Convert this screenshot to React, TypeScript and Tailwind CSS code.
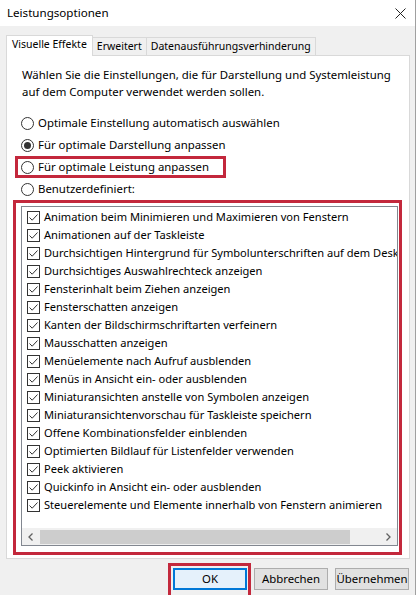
const items = [
  "Animation beim Minimieren und Maximieren von Fenstern",
  "Animationen auf der Taskleiste",
  "Durchsichtigen Hintergrund für Symbolunterschriften auf dem Desktop",
  "Durchsichtiges Auswahlrechteck anzeigen",
  "Fensterinhalt beim Ziehen anzeigen",
  "Fensterschatten anzeigen",
  "Kanten der Bildschirmschriftarten verfeinern",
  "Mausschatten anzeigen",
  "Menüelemente nach Aufruf ausblenden",
  "Menüs in Ansicht ein- oder ausblenden",
  "Miniaturansichten anstelle von Symbolen anzeigen",
  "Miniaturansichtenvorschau für Taskleiste speichern",
  "Offene Kombinationsfelder einblenden",
  "Optimierten Bildlauf für Listenfelder verwenden",
  "Peek aktivieren",
  "Quickinfo in Ansicht ein- oder ausblenden",
  "Steuerelemente und Elemente innerhalb von Fenstern animieren",
];

const radios = [
  { label: "Optimale Einstellung automatisch auswählen", checked: false },
  { label: "Für optimale Darstellung anpassen", checked: true },
  { label: "Für optimale Leistung anpassen", checked: false, marked: true },
  { label: "Benutzerdefiniert:", checked: false },
];

function Radio({ checked }: { checked: boolean }) {
  return (
    <span className="w-[13px] h-[13px] rounded-full border border-[#333] bg-white flex items-center justify-center shrink-0">
      {checked && <span className="w-[7px] h-[7px] rounded-full bg-[#333]" />}
    </span>
  );
}

function Check() {
  return (
    <span className="w-[13px] h-[13px] border border-[#333] bg-white shrink-0 flex items-center justify-center">
      <svg width="11" height="11" viewBox="0 0 11 11">
        <path d="M1.5 5.5 L4.2 8.2 L9.5 2.5" fill="none" stroke="#333" strokeWidth="1" />
      </svg>
    </span>
  );
}

function Button({ label, primary }: { label: string; primary?: boolean }) {
  return (
    <button
      className={
        primary
          ? "w-[74px] h-[22px] bg-[#e5f1fb] border-2 border-[#0078d7] text-[11.4px] text-black"
          : "w-[74px] h-[22px] bg-[#e1e1e1] border border-[#adadad] text-[11.4px] text-black"
      }
    >
      {label}
    </button>
  );
}

export default function App() {
  return (
    <div
      className="w-[418px] h-[595px] bg-white flex overflow-hidden text-black text-[11.4px]"
      style={{ fontFamily: '"Noto Sans", "Open Sans", sans-serif' }}
    >
      <div className="w-[416px] h-full bg-[#f0f0f0] border-r border-[#a0a0a0] flex flex-col">
        {/* title bar */}
        <div className="h-[26px] bg-white flex items-center justify-between pl-[7px] pr-[9px] shrink-0">
          <span className="text-[11.6px]">Leistungsoptionen</span>
          <svg width="11" height="11" viewBox="0 0 11 11">
            <path d="M0.5 0.5 L10.5 10.5 M10.5 0.5 L0.5 10.5" stroke="#222" strokeWidth="1" />
          </svg>
        </div>

        <div className="px-[6px] pt-[8px] flex flex-col">
          {/* tabs */}
          <div className="flex items-end h-[21px] whitespace-nowrap text-[10.5px]">
            <div className="h-[21px] px-[5px] bg-white border border-b-0 border-[#d9d9d9] flex items-center relative z-10 -mb-px pb-[3px]">
              Visuelle Effekte
            </div>
            <div className="h-[18px] px-[4px] bg-[#f0f0f0] border border-l-0 border-b-0 border-[#d9d9d9] flex items-center">
              Erweitert
            </div>
            <div className="h-[18px] px-[4px] bg-[#f0f0f0] border border-l-0 border-b-0 border-[#d9d9d9] flex items-center">
              Datenausführungsverhinderung
            </div>
          </div>

          {/* panel */}
          <div className="w-[404px] h-[504px] bg-white border border-[#d9d9d9] pt-[10px] flex flex-col">
            <p className="pl-[15px] leading-[17px] whitespace-nowrap">
              Wählen Sie die Einstellungen, die für Darstellung und Systemleistung
              <br />
              auf dem Computer verwendet werden sollen.
            </p>

            <div className="mt-[12px] pl-[14px] flex flex-col">
              {radios.map((r) => (
                <div key={r.label} className="h-[22px] flex items-center gap-[4px] relative">
                  <Radio checked={r.checked} />
                  <span>{r.label}</span>
                  {r.marked && (
                    <span className="absolute -left-[6px] top-0 w-[211px] h-[22px] border-[3px] border-[#c3283c]" />
                  )}
                </div>
              ))}
            </div>

            {/* list box */}
            <div className="mt-[6px] ml-[14px] w-[377px] h-[340px] relative">
              <div className="w-full h-full border border-[#828790] bg-white flex flex-col overflow-hidden">
                <div className="flex-1 pt-[1px] pl-[5px] overflow-hidden text-[11.1px]">
                  {items.map((t) => (
                    <div key={t} className="h-[18px] flex items-center gap-[4px] whitespace-nowrap">
                      <Check />
                      <span>{t}</span>
                    </div>
                  ))}
                </div>
                {/* horizontal scrollbar */}
                <div className="h-[17px] bg-[#f0f0f0] flex items-center shrink-0">
                  <span className="w-[17px] flex justify-center">
                    <svg width="6" height="8" viewBox="0 0 6 8">
                      <path d="M4.5 0.5 L1 4 L4.5 7.5" fill="none" stroke="#606060" strokeWidth="1.3" />
                    </svg>
                  </span>
                  <span className="ml-[1px] w-[310px] h-[14px] bg-[#cdcdcd]" />
                  <span className="flex-1 flex justify-end pr-[6px]">
                    <svg width="6" height="8" viewBox="0 0 6 8">
                      <path d="M1.5 0.5 L5 4 L1.5 7.5" fill="none" stroke="#606060" strokeWidth="1.3" />
                    </svg>
                  </span>
                </div>
              </div>
              <span className="absolute -left-[8px] -right-[4px] -top-[6px] -bottom-[9px] border-[3px] border-[#c3283c] pointer-events-none" />
            </div>
          </div>

          {/* buttons */}
          <div className="mt-[9px] flex justify-end gap-[7px]">
            <div className="relative">
              <Button label="OK" primary />
              <span className="absolute -left-[5px] -right-[4px] -top-[5px] -bottom-[10px] border-[3px] border-[#c3283c]" />
            </div>
            <Button label="Abbrechen" />
            <Button label="Übernehmen" />
          </div>
        </div>
      </div>
    </div>
  );
}
